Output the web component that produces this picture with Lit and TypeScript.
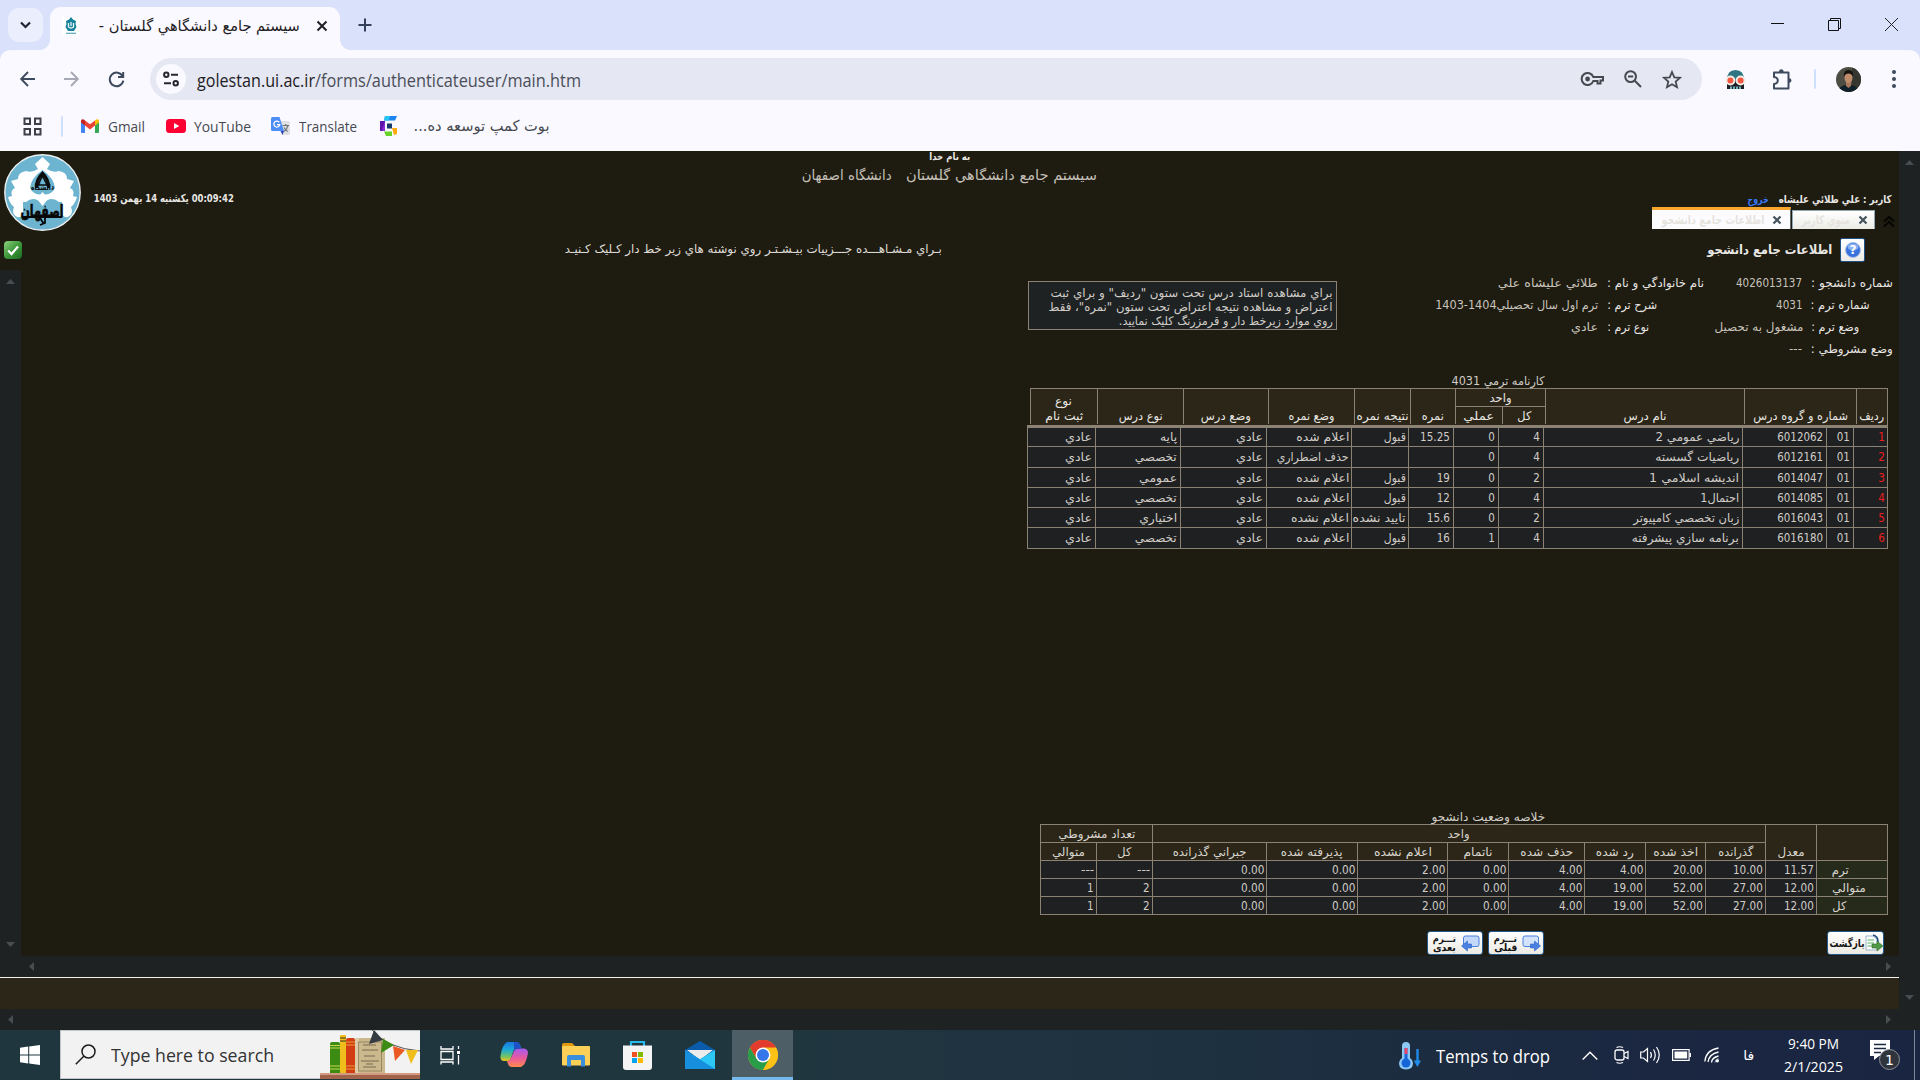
import { LitElement, html, svg, css, nothing } from "lit";
import { customElement, property } from "lit/decorators.js";

/** One line of text condensed or widened to an exact advance width. */
@customElement("fit-text")
class FitText extends LitElement {
  @property() t = "";
  @property({ type: Number }) w = 0;
  @property({ type: Boolean, reflect: true }) rtl = false;
  static styles = css`
    :host { display: inline-block; white-space: pre; flex: none; text-align: left; }
    :host([rtl]) { direction: rtl; text-align: right; }
    span { display: inline-block; transform-origin: 0 50%; }
    :host([rtl]) span { transform-origin: 100% 50%; }
  `;
  updated() {
    const s = this.renderRoot.querySelector("span") as HTMLElement;
    s.style.transform = "none";
    if (!this.w) return;
    this.style.width = this.w + "px";
    const r = s.getBoundingClientRect().width;
    if (r) s.style.transform = `scaleX(${this.w / r})`;
  }
  render() {
    return html`<span>${this.t}</span>`;
  }
}

const fa = (t: string, w: number, cls = "") => html`<fit-text rtl class=${cls} .t=${t} .w=${w}></fit-text>`;
const en = (t: string, w: number, cls = "") => html`<fit-text class=${cls} .t=${t} .w=${w}></fit-text>`;
const icon = (w: number, h: number, body: unknown, cls = "", vb = `0 0 ${w} ${h}`) =>
  html`<svg class="ic ${cls}" width=${w} height=${h} viewBox=${vb} fill="none">${body}</svg>`;

type T = [string, number];
const D = (n: string): T => [n, Math.round([...n].reduce((a, c) => a + (c === "." ? 3.6 : c === "-" ? 4.4 : 6.55), 0) * 10) / 10];
const ADI: T = ["عادي", 27];
const PASS: T = ["قبول", 22];
const SHOWN: T = ["اعلام شده", 53];
const SPEC: T = ["تخصصي", 42];
const NONE: T = ["", 0];

const courses: T[][] = [
  [ADI, ["پايه", 17], ADI, SHOWN, PASS, D("15.25"), D("0"), D("4"), ["رياضي عمومي 2", 84], D("6012062"), D("01"), D("1")],
  [ADI, SPEC, ADI, ["حذف اضطراري", 72], NONE, NONE, D("0"), D("4"), ["رياضيات گسسته", 84], D("6012161"), D("01"), D("2")],
  [ADI, ["عمومي", 38], ADI, SHOWN, PASS, D("19"), D("0"), D("2"), ["انديشه اسلامي 1", 90], D("6014047"), D("01"), D("3")],
  [ADI, SPEC, ADI, SHOWN, PASS, D("12"), D("0"), D("4"), ["احتمال1", 39], D("6014085"), D("01"), D("4")],
  [ADI, ["اختياري", 38], ADI, ["اعلام نشده", 58], ["تاييد نشده", 53], D("15.6"), D("0"), D("2"), ["زبان تخصصي كامپيوتر", 106], D("6016043"), D("01"), D("5")],
  [ADI, SPEC, ADI, SHOWN, PASS, D("16"), D("1"), D("4"), ["برنامه سازي پيشرفته", 107], D("6016180"), D("01"), D("6")],
];

const sumHead: T[] = [
  ["متوالي", 33], ["كل", 14], ["جبراني گذرانده", 74], ["پذيرفته شده", 62], ["اعلام نشده", 58], ["ناتمام", 29],
  ["حذف شده", 53], ["رد شده", 38], ["اخذ شده", 45], ["گذرانده", 35],
];
const sumRows: [string[], T][] = [
  [["---", "---", "0.00", "0.00", "2.00", "0.00", "4.00", "4.00", "20.00", "10.00", "11.57"], ["ترم", 17]],
  [["1", "2", "0.00", "0.00", "2.00", "0.00", "4.00", "19.00", "52.00", "27.00", "12.00"], ["متوالي", 34]],
  [["1", "2", "0.00", "0.00", "2.00", "0.00", "4.00", "19.00", "52.00", "27.00", "12.00"], ["كل", 14]],
];

const closeX = svg`<path d="M1.5 1.5L8.5 8.5M8.5 1.5L1.5 8.5" stroke="#46525c" stroke-width="2.2"/>`;

@customElement("app-root")
class AppRoot extends LitElement {
  static styles = css`
    :host { display: block; width: 1920px; height: 1080px; overflow: hidden; }
    * { box-sizing: border-box; }
    .app { width: 1920px; height: 1080px; display: flex; flex-direction: column; background: #1e1b10; }
    .ic { display: block; flex: none; overflow: visible; }

    /* browser frame */
    .chrome { background: #dae1fa; font-family: "Open Sans", "Noto Sans", "DejaVu Sans Condensed", sans-serif; color: #1f2023; height: 151px; flex: none; }
    .strip { height: 50px; display: flex; padding-left: 8px; }
    .menu { width: 35px; height: 34px; margin-top: 8px; border-radius: 11px; background: #ebeffd; display: grid; place-items: center; }
    .tab { width: 290px; height: 43px; margin: 7px 0 0 7px; padding: 0 14px 6px 12px; background: #faf9ff; border-radius: 11px 11px 0 0; display: flex; align-items: center; position: relative; }
    .tab::before, .tab::after { content: ""; position: absolute; bottom: 0; width: 10px; height: 10px; }
    .tab::before { left: -10px; background: radial-gradient(circle at 0 0, transparent 9.5px, #faf9ff 10px); }
    .tab::after { right: -10px; background: radial-gradient(circle at 100% 0, transparent 9.5px, #faf9ff 10px); }
    .tabtitle { font-size: 15px; margin: 0 16px 0 19px; font-family: "DejaVu Sans Condensed", sans-serif; }
    .plus { margin: 18px 0 0 18px; }
    .wc { margin-left: auto; margin-right: 22px; display: flex; gap: 44px; padding-top: 18px; }
    .mid { background: #faf9ff; border-radius: 10px 10px 0 0; }
    .toolbar { height: 58px; display: flex; align-items: center; padding-left: 20px; }
    .i-fwd { margin-left: 29px; }
    .i-rel { margin-left: 29px; }
    .omni { width: 1552px; height: 42px; border-radius: 21px; background: #e5e8f3; margin-left: 25px; display: flex; align-items: center; padding: 0 20px 0 6px; }
    .site { width: 30px; height: 30px; border-radius: 50%; background: #faf9ff; display: grid; place-items: center; margin-right: 11px; }
    .url { font-size: 18px; line-height: 30px; display: flex; padding-top: 1px; }
    .url .path { color: #4b4e58; }
    .omni-r { margin-left: auto; display: flex; align-items: center; gap: 20px; }
    .ext { display: flex; align-items: center; padding-left: 23px; }
    .i-puz { margin-left: 25px; }
    .vsep { width: 2px; height: 20px; background: #cfe0fc; border-radius: 1px; }
    .vsep.a { margin: 0 20px 0 21px; }
    .i-dots { margin-left: 31px; }
    .marks { height: 43px; padding: 0 0 7px 23px; display: flex; align-items: center; font-size: 15px; color: #46494f; }
    .vsep.b { margin: 0 18px 0 19px; height: 21px; }
    .m1 { margin: 0 21px 0 9px; }
    .m2 { margin: 0 20px 0 8px; }
    .m3 { margin: 0 23px 0 9px; }
    .m4 { margin-left: 16px; font-family: "DejaVu Sans Condensed", sans-serif; }

    /* page */
    .page { height: 879px; flex: none; display: grid; grid-template-columns: 1899px 21px; font-family: "DejaVu Sans Condensed", "DejaVu Sans", sans-serif; font-size: 12px; color: #d1cdc7; }
    .bar { background: #1f2223; display: flex; justify-content: space-between; align-items: center; }
    .bar.v { flex-direction: column; }
    .main { display: flex; flex-direction: column; }
    .bar.r { padding: 9px 0 30px; }
    .bar.l { width: 21px; padding: 9px 0 9px; flex: none; }
    .bar.h1 { height: 21px; padding: 0 8px 0 29px; }
    .bar.h2 { height: 21px; padding: 0 8px 0 8px; }
    .top { height: 84px; display: grid; grid-template-columns: 1fr auto 1fr; }
    .brand { display: flex; padding: 3px 0 0 4px; gap: 13px; }
    .brand .date { margin-top: 37px; font-size: 11px; line-height: 16px; font-weight: bold; color: #e8e6e3; }
    .names { display: flex; flex-direction: column; align-items: center; }
    .names .god { font-size: 10px; line-height: 12px; font-weight: bold; color: #e8e6e3; }
    .names .sys { display: flex; gap: 14px; font-size: 14px; line-height: 20px; margin-top: 2px; color: #c5c0b8; }
    .who { display: flex; flex-direction: column; align-items: flex-end; padding-top: 41px; }
    .user { display: flex; gap: 10px; padding-right: 7px; font-size: 11px; line-height: 15px; font-weight: bold; color: #e8e6e3; }
    .user .out { color: #3b78f6; }
    .tabs { display: flex; align-items: flex-end; height: 22px; font-weight: bold; color: #e6e3df; line-height: 16px; }
    .pt { display: flex; align-items: center; justify-content: flex-end; }
    .pt.on { width: 139px; height: 22px; background: #fcfcfe; border-top: 3px solid #f8a72c; padding-right: 8px; gap: 7px; border-right: 1px solid #5f6c70; }
    .pt.off { width: 83px; height: 19px; margin-left: 1px; background: linear-gradient(#fff, #ecece6); border: 1px solid #91a7b4; border-bottom: 0; padding-right: 6px; gap: 8px; }
    .up { margin: 0 4px 2px 8px; }
    .status { height: 35px; display: flex; align-items: flex-start; padding: 3px 34px 0 4px; color: #e8e6e3; line-height: 23px; }
    .status .ok { margin-top: 3px; }
    .status .msg { margin-left: 543px; color: #dedbd6; }
    .status .ttl { margin-left: auto; font-weight: bold; font-size: 13px; }
    .help { width: 25px; height: 24px; border: 1px solid #1f5185; background: linear-gradient(#fff, #ecebe6); border-radius: 2px; display: grid; place-items: center; margin-left: 8px; }
    .view { height: 686px; display: flex; }
    .doc { width: 1878px; padding: 2px 11px 0 1006px; display: flex; flex-direction: column; }
    .info { display: grid; grid-template-columns: 310px 260px 116px 88px 90px; grid-template-rows: repeat(4, 22px); line-height: 22px; padding-left: 1px; width: 865px; }
    .lab { padding-left: 9px; color: #e8e6e3; }
    .val { text-align: right; color: #c8c3bb; }
    .note { grid-row: 1 / 5; margin-top: 9px; width: 309px; height: 49px; border: 1px solid #8c8273; background: #1f2223; display: flex; flex-direction: column; align-items: flex-end; padding: 4px 3px 0 0; line-height: 14px; }
    .cap { text-align: center; line-height: 14px; }
    .cap.c1 { height: 14px; margin-top: 14px; padding-right: 343px; text-align: right; }
    .cap.c2 { height: 14px; margin-top: 261px; padding-right: 343px; text-align: right; }
    .head { align-self: flex-end; margin-right: 0; width: 858px; height: 37px; display: grid; grid-template-columns: 67px 86px 85px 86px 56px 45px 47px 43px 199px 112px 31px; grid-template-rows: 17px 18px; background: #2b2617; border-top: 1px solid #8c8273; border-right: 1px solid #8c8273; color: #e8e6e3; }
    .th { border-left: 1px solid #8c8273; grid-row: 1 / 3; display: flex; flex-direction: column; align-items: center; justify-content: flex-end; line-height: 15px; }
    .th.two { grid-row: 1; grid-column: span 2; border-bottom: 1px solid #8c8273; height: 18px; }
    .th.sub { grid-row: 2; }
    .th.sub.s1 { grid-column: 7; border-left: 1px solid #8c8273; }
    .th.sub.s2 { grid-column: 8; }
    .th.c9 { grid-column: 9; } .th.c10 { grid-column: 10; } .th.c11 { grid-column: 11; }
    .wrap { display: flex; flex-direction: column; width: 861px; margin-left: 0; }
    .body { width: 861px; border-top: 3px solid #8c8273; border-right: 1px solid #8c8273; background: #1f2022; display: grid; grid-template-columns: 68px 85px 86px 85px 57px 45px 45px 45px 199px 84px 27px 34px; grid-template-rows: 19px 21px 20px 20px 20px 21px; }
    .td { border-left: 1px solid #8c8273; border-bottom: 1px solid #8c8273; display: flex; justify-content: flex-end; align-items: center; padding-right: 3px; line-height: 16px; min-width: 0; }
    .td.tight { padding-right: 2px; }
    .td.red { color: #f01e1e; padding-right: 2px; }
    .sum { width: 848px; align-self: flex-start; margin-left: 13px; display: grid; grid-template-columns: 56px 56px 114px 91px 90px 61px 76px 61px 60px 60px 51px 71px; grid-template-rows: repeat(5, 18px); border-top: 1px solid #8c8273; border-right: 1px solid #8c8273; background: #1f2022; }
    .sh { border-left: 1px solid #8c8273; border-bottom: 1px solid #8c8273; background: #2b2617; display: flex; justify-content: center; align-items: center; line-height: 16px; color: #d8d4ce; }
    .sh.w2 { grid-column: span 2; }
    .sh.w8 { grid-column: span 8; }
    .sh.r2 { grid-row: 1 / 3; align-items: flex-end; }
    .sh.gpa { grid-column: 11; }
    .sh.none { grid-column: 12; }
    .sh.row { background: #262a1a; justify-content: flex-start; padding-left: 15px; }
    .btns { display: flex; margin-top: 16px; padding-left: 400px; gap: 5px; width: 857px; }
    .btn { width: 56px; height: 24px; border: 1px solid #24598f; border-radius: 3px; background: linear-gradient(#fff, #ebeae2); display: flex; align-items: center; justify-content: space-between; color: #141414; font-weight: bold; padding: 0 2px 0 5px; }
    .btn .two { display: flex; flex-direction: column; line-height: 9px; font-size: 10px; align-items: center; padding-bottom: 1px; }
    .btn.back { width: 57px; margin-left: auto; padding: 0 0 0 1px; font-size: 11px; margin-right: 0; }
    .foot { height: 32px; border-top: 1px solid #f4f2ec; background: #2b2617; }

    /* taskbar */
    .task { height: 50px; flex: none; display: flex; background: linear-gradient(90deg, #20363f 0, #20363f 800px, #1d3040 1250px, #1b2741 1650px, #1a2542 1920px); font-family: "Open Sans", "Noto Sans", sans-serif; color: #fff; align-items: center; }
    .start { margin: 0 20px; }
    .search { width: 360px; height: 49px; align-self: flex-start; background: #f2f2f2; border: 1px solid #c2c5c6; border-right: 0; display: flex; align-items: center; padding-left: 14px; color: #333; font-size: 18px; }
    .search .q { margin-left: 15px; }
    .search .art { margin-left: auto; }
    .apps { display: flex; align-items: center; height: 50px; }
    .a0 { margin-left: 20px; } .a1 { margin-left: 40px; } .a2 { margin-left: 34px; } .a3 { margin-left: 33px; } .a4 { margin-left: 33px; }
    .live { width: 61px; height: 50px; margin-left: 17px; background: #4d5e66; border-bottom: 3px solid #76b9ed; display: grid; place-items: center; padding-top: 3px; }
    .temp { margin-left: 606px; }
    .wt { margin-left: 15px; font-size: 17.5px; padding-top: 1px; }
    .t1 { margin-left: 32px; } .t2 { margin-left: 16px; } .t3 { margin-left: 11px; } .t4 { margin-left: 11px; } .t5 { margin-left: 13px; }
    .lang { margin-left: 23px; font-family: "DejaVu Sans Condensed", sans-serif; font-size: 13px; }
    .clock { width: 60px; margin-left: 29px; height: 50px; display: flex; flex-direction: column; align-items: center; font-size: 14.5px; line-height: 23px; padding-top: 2px; }
    .noti { margin-left: 27px; }
    .edge { margin-left: auto; margin-right: 5px; width: 1px; height: 50px; background: #7d8796; }
    svg text { font-family: "DejaVu Sans", sans-serif; }
  `;

  private arrow(d: "u" | "d" | "l" | "r") {
    const p = { u: "M0 5L4.5 0L9 5Z", d: "M0 0L4.5 5L9 0Z", l: "M5 0L0 4.5L5 9Z", r: "M0 0L5 4.5L0 9Z" }[d];
    const v = d === "u" || d === "d";
    return icon(v ? 9 : 5, v ? 5 : 9, svg`<path d=${p} fill="#484d50"/>`);
  }

  private chrome() {
    return html`<div class="chrome">
      <div class="strip">
        <div class="menu">${icon(11, 8, svg`<path d="M1 1.5L5.5 6L10 1.5" stroke="#1f2430" stroke-width="2.2"/>`)}</div>
        <div class="tab">
          ${icon(18, 18, svg`<rect width="18" height="18" fill="#fff"/><path d="M9 0L11 2.5L14 4L13.5 7L14.5 10L12 14H6L3.5 10L4.5 7L4 4L7 2.5Z" fill="#17839b"/><path d="M6.5 6V10Q9 12 11.5 10V6M9 5V9" stroke="#e9f6f8" stroke-width="1.3"/><path d="M4 16.3H14" stroke="#58a8b8" stroke-width="1.2"/>`)}
          ${fa("سيستم جامع دانشگاهي گلستان -", 201, "tabtitle")}
          ${icon(12, 12, svg`<path d="M1.5 1.5L10.5 10.5M10.5 1.5L1.5 10.5" stroke="#1f2023" stroke-width="2"/>`)}
        </div>
        ${icon(14, 14, svg`<path d="M7 0.5V13.5M0.5 7H13.5" stroke="#33415a" stroke-width="2"/>`, "plus")}
        <div class="wc">
          ${icon(13, 13, svg`<path d="M0 5.5H13" stroke="#111"/>`)}
          ${icon(13, 13, svg`<path d="M.5 2.5H10.5V12.5H.5ZM2.5 2.5V.5H12.5V10.5H10.5" stroke="#111"/>`)}
          ${icon(13, 13, svg`<path d="M0 0L13 13M13 0L0 13" stroke="#222"/>`)}
        </div>
      </div>
      <div class="mid">
        <div class="toolbar">
          ${icon(15, 16, svg`<path d="M15 8H1.5M8 1L1.2 8L8 15" stroke="#3e4a5e" stroke-width="1.9"/>`)}
          ${icon(15, 16, svg`<path d="M0 8H13.5M7 1L13.8 8L7 15" stroke="#a6a8b3" stroke-width="1.9"/>`, "i-fwd")}
          ${icon(17, 17, svg`<path d="M14.6 5.2A6.8 6.8 0 1 0 15.3 9.6M15.2 1V6H10" stroke="#3e4a5e" stroke-width="2"/>`, "i-rel")}
          <div class="omni">
            <div class="site">${icon(16, 16, svg`<g stroke="#26282e" stroke-width="2"><circle cx="3.3" cy="3.8" r="2.2"/><path d="M8 3.8H15M1 12.2H8"/><circle cx="12.7" cy="12.2" r="2.2"/></g>`)}</div>
            <div class="url">${en("golestan.ui.ac.ir", 118)}${en("/forms/authenticateuser/main.htm", 266, "path")}</div>
            <div class="omni-r">
              ${icon(23, 14, svg`<g stroke="#45484f" stroke-width="2"><path d="M12.3 5H22V8.5H19.5V11.5H16.5V9H12.3A6 6 0 1 1 12.3 5Z"/></g><circle cx="6.6" cy="7" r="2.4" fill="#45484f"/>`)}
              ${icon(18, 18, svg`<g stroke="#45484f" stroke-width="2"><circle cx="6.6" cy="6.6" r="5.4"/><path d="M10.8 10.8L17 17M4 6.6H9.2"/></g>`)}
              ${icon(20, 19, svg`<path d="M10 2L12.3 7.3L18 7.8L13.7 11.6L15 17.2L10 14.2L5 17.2L6.3 11.6L2 7.8L7.7 7.3Z" stroke="#45484f" stroke-width="1.8"/>`)}
            </div>
          </div>
          <div class="ext">
            ${icon(21, 19, svg`<path d="M2 10Q2 0 10.500 0Q19 0 19 10Z" fill="#2f7482"/><path d="M2 10H19V19H2Z" fill="#1a1d22"/><path d="M5 19V16.500H16V19Z" fill="#6fb0b8"/><path d="M7.500 16.500V19M10.500 16.500V19M13.500 16.500V19" stroke="#1a1d22"/><circle cx="5.400" cy="10.500" r="4" fill="#f4563f" stroke="#f1ece6" stroke-width="2"/><circle cx="15.600" cy="10.500" r="4" fill="#f4563f" stroke="#f1ece6" stroke-width="2"/>`)}
            ${icon(22, 21, svg`<path d="M3 3.500H17.500V19.500H3V15Q6.800 14.500 6.800 11.500Q6.800 8.500 3 8Z" stroke="#3e4a5e" stroke-width="2" stroke-linejoin="round"/><path d="M8 3Q8 .3 10.300 .3Q12.600 .3 12.600 3ZM18 9.300Q20.500 9.300 20.500 11.500Q20.500 13.700 18 13.700Z" fill="#3e4a5e"/>`, "i-puz")}
            <div class="vsep a"></div>
            ${icon(25, 25, svg`<defs><clipPath id="av"><circle cx="12.500" cy="12.500" r="12.500"/></clipPath></defs><g clip-path="url(#av)"><rect width="25" height="25" fill="#4d4d43"/><rect x="16" width="9" height="25" fill="#35362f"/><path d="M2 25Q3 18 12 17.500Q22 18 23 25Z" fill="#10202a"/><path d="M10 14H15V19L12.500 21L10 19Z" fill="#a8765a"/><ellipse cx="12.500" cy="10.500" rx="4" ry="5.500" fill="#c08d6c"/><path d="M8 10Q7 3 12.500 3Q18 3 17 10Q16 6.500 12.500 6.500Q9 6.500 8 10Z" fill="#15120f"/></g>`)}
            ${icon(4, 18, svg`<g fill="#3e4a5e"><circle cx="2" cy="2" r="2"/><circle cx="2" cy="9" r="2"/><circle cx="2" cy="16" r="2"/></g>`, "i-dots")}
          </div>
        </div>
        <div class="marks">
          ${icon(19, 19, svg`<path d="M1.500 1.500H7V7H1.500ZM12 1.500H17.500V7H12ZM1.500 12H7V17.500H1.500ZM12 12H17.500V17.500H12Z" stroke="#3d4047" stroke-width="2"/>`)}
          <div class="vsep b"></div>
          ${icon(18, 14, svg`<path d="M0 2V13Q0 14 1 14H4V6L0 3Z" fill="#4285f4"/><path d="M14 6V14H17Q18 14 18 13V2L14 5Z" fill="#34a853"/><path d="M4 1.500L9 5.300L14 1.500V6.500L9 10.400L4 6.500Z" fill="#ea4335"/><path d="M0 2Q.3 -.8 2.800 .6L4 1.500V6.500L0 3.500Z" fill="#c5221f"/><path d="M18 2Q17.700 -.8 15.200 .6L14 1.500V6.500L18 3.500Z" fill="#fbbc04"/>`)}
          ${en("Gmail", 37, "m1")}
          ${icon(20, 14, svg`<rect width="20" height="14" rx="3.500" fill="#f03"/><path d="M8 4L13.300 7L8 10Z" fill="#fff"/>`)}
          ${en("YouTube", 57, "m2")}
          ${icon(19, 18, svg`<path d="M7 4H17.500Q19 4 19 5.500V16.500Q19 18 17.500 18H11Z" fill="#dfe1e4"/><path d="M1.500 0H8.500L13 14H1.500Q0 14 0 12.500V1.500Q0 0 1.500 0Z" fill="#4d8df6"/><path d="M9.500 14H13L11.500 18Z" fill="#3445b4"/><path d="M8.300 5.300A3 3 0 1 0 8.800 7.600H6" stroke="#fff" stroke-width="1.300"/><path d="M11.500 8.500H18M14.700 7V8.500M17 8.500Q16 12.500 13 14.500M13 10.500Q14.500 13.500 17 14.500" stroke="#6b7378" stroke-width="1.100"/>`)}
          ${en("Translate", 58, "m3")}
          ${icon(17, 20, svg`<path d="M5 0H17L15 4.500H4Z" fill="#1a84f0"/><path d="M5 0H10L9 4.500H4Z" fill="#26c4f0"/><path d="M0 5H5V15H0Z" fill="#8b2fd6"/><path d="M0 5H5L2 15H0Z" fill="#6215ac"/><path d="M4 15.500H12V20H6Z" fill="#66d32a"/><path d="M12 12H17V18L14 19Z" fill="#ffab10"/><rect x="7" y="7.500" width="5" height="5" fill="#173b66"/>`)}
          ${fa("بوت کمپ توسعه ده...", 136, "m4")}
        </div>
      </div>
    </div>`;
  }

  private logo() {
    return icon(77, 77, svg`
      <circle cx="38.500" cy="38.500" r="37.700" fill="#6cb4d0" stroke="#e9eff0" stroke-width="1.400"/>
      <path d="M38.500 3L46 10L43 15Q49 19 55 17Q63 18 63 25L70 27L66 34Q71 36 69 42L73 43Q71 50 67 53Q70 60 64 63Q58 64 58 58V48H44L38.500 43L33 48H19V58Q19 64 13 63Q7 60 10 53Q6 50 4 43L8 42Q6 36 11 34L7 27L14 25Q14 18 22 17Q28 19 34 15L31 10Z" fill="#fff"/>
      <path d="M38.500 16Q27 24 26 34Q30 42 38.500 40Q47 42 51 34Q50 24 38.500 16Z" fill="#6cb4d0"/>
      <path d="M38.500 17Q30 25 31 34H34Q34 26 38.500 22Q43 26 43 34H46Q47 25 38.500 17Z" fill="#0c0c0c"/>
      <path d="M38.500 22L43 31H34Z" stroke="#0c0c0c" stroke-width="1.500"/>
      <path d="M22 48Q30 41 38.500 50Q47 41 55 48V56H22Z" fill="#6cb4d0"/>
      <path d="M38.500 38L44 45L38.500 52L33 45Z" fill="#fff"/>
      <text x="38.500" y="36" text-anchor="middle" font-size="8.500" font-weight="bold" fill="#0c0c0c" textLength="23" lengthAdjust="spacingAndGlyphs">دانشگاه</text>
      <text x="38" y="63" text-anchor="middle" font-size="17" font-weight="bold" fill="#070707" stroke="#070707" stroke-width=".6" textLength="43" lengthAdjust="spacingAndGlyphs">اصفهان</text>
      <path d="M18 63H58M36 64L40 70M41 64V69L36 71" stroke="#070707" stroke-width="1.800"/>`);
  }

  private top() {
    return html`<div class="top">
        <div class="brand">${this.logo()}${fa("00:09:42 يکشنبه 14 بهمن 1403", 140, "date")}</div>
        <div class="names">
          ${fa("به نام خدا", 41, "god")}
          <div class="sys">${fa("دانشگاه اصفهان", 90)}${fa("سيستم جامع دانشگاهي گلستان", 191)}</div>
        </div>
        <div class="who">
          <div class="user">${fa("خروج", 21, "out")}${fa("کاربر : علي طلائي عليشاه", 113)}</div>
          <div class="tabs">
            <div class="pt on">${fa("اطلاعات جامع دانشجو", 103)}${icon(10, 10, closeX)}</div>
            <div class="pt off">${fa("منوي کاربر", 48)}${icon(10, 10, closeX)}</div>
            ${icon(12, 12, svg`<path d="M1 6.500L6 1.800L11 6.500M1 11.500L6 6.800L11 11.500" stroke="#050504" stroke-width="2"/>`, "up")}
          </div>
        </div>
      </div>
      <div class="status">
        ${icon(18, 18, svg`<defs><linearGradient id="g" x2="1" y2="1"><stop stop-color="#8ed07c"/><stop offset=".5" stop-color="#3f9a3b"/><stop offset="1" stop-color="#1c6a22"/></linearGradient></defs><rect width="18" height="18" rx="4" fill="url(#g)"/><path d="M4.200 9.500L7.500 13L14 5.500" stroke="#fff" stroke-width="2.200"/>`, "ok")}
        ${fa("بـراي مـشـاهـــده جـــزييات بيـشـتـر روي نوشته هاي زير خط دار کـليک کـنيـد", 377, "msg")}
        ${fa("اطلاعات جامع دانشجو", 125, "ttl")}
        <div class="help">${icon(16, 16, svg`<circle cx="8" cy="8" r="7.500" fill="#3a72dd" stroke="#a9bfe6"/><ellipse cx="8" cy="5" rx="5.500" ry="3.500" fill="#86aef2"/><text x="8" y="12.300" text-anchor="middle" font-size="12" font-weight="bold" fill="#fff">?</text>`)}</div>
      </div>`;
  }

  private info() {
    return html`<div class="info">
      <div class="note">
        ${fa('براي مشاهده استاد درس تحت ستون "رديف" و براي ثبت', 282)}
        ${fa('اعتراض و مشاهده نتيجه اعتراض تحت ستون "نمره"، فقط', 284)}
        ${fa("روي موارد زيرخط دار و قرمزرنگ کليک نماييد.", 214)}
      </div>
      <div class="val">${fa("طلائي عليشاه علي", 100)}</div><div class="lab">${fa("نام خانوادگي و نام :", 97)}</div>
      <div class="val">${en("4026013137", 66)}</div><div class="lab">${fa("شماره دانشجو :", 82)}</div>
      <div class="val">${fa("ترم اول سال تحصيلي1404-1403", 163)}</div><div class="lab">${fa("شرح ترم :", 50)}</div>
      <div class="val">${en("4031", 26.5)}</div><div class="lab">${fa("شماره ترم :", 59)}</div>
      <div class="val">${fa("عادي", 27)}</div><div class="lab">${fa("نوع ترم :", 42)}</div>
      <div class="val">${fa("مشغول به تحصيل", 89)}</div><div class="lab">${fa("وضع ترم :", 48)}</div>
      <div></div><div></div>
      <div class="val">${en("---", 13)}</div><div class="lab">${fa("وضع مشروطي :", 82)}</div>
    </div>`;
  }

  private report() {
    return html`<div class="cap c1">${fa("کارنامه ترمي 4031", 93)}</div>
      <div class="wrap">
        <div class="head">
          <div class="th">${fa("نوع", 17)}${fa("ثبت نام", 38)}</div>
          <div class="th">${fa("نوع درس", 44)}</div>
          <div class="th">${fa("وضع درس", 50)}</div>
          <div class="th">${fa("وضع نمره", 46)}</div>
          <div class="th">${fa("نتيجه نمره", 52)}</div>
          <div class="th">${fa("نمره", 22)}</div>
          <div class="th two">${fa("واحد", 22)}</div>
          <div class="th sub s1">${fa("عملي", 31)}</div>
          <div class="th sub s2">${fa("كل", 14)}</div>
          <div class="th c9">${fa("نام درس", 43)}</div>
          <div class="th c10">${fa("شماره و گروه درس", 95)}</div>
          <div class="th c11">${fa("رديف", 25)}</div>
        </div>
        <div class="body">
          ${courses.map((r) => r.map(([t, w], i) => html`<div class="td ${i === 11 ? "red" : i === 4 || i === 3 ? "tight" : ""}">${t ? fa(t, w) : nothing}</div>`))}
        </div>
      </div>`;
  }

  private summary() {
    return html`<div class="cap c2">${fa("خلاصه وضعيت دانشجو", 114)}</div>
      <div class="sum">
        <div class="sh w2">${fa("تعداد مشروطي", 77)}</div>
        <div class="sh w8">${fa("واحد", 22)}</div>
        <div class="sh r2 gpa">${fa("معدل", 27)}</div>
        <div class="sh r2 none"></div>
        ${sumHead.map(([t, w]) => html`<div class="sh">${fa(t, w)}</div>`)}
        ${sumRows.map(([c, [l, w]]) => html`${c.map((n) => html`<div class="td tight">${en(...D(n))}</div>`)}<div class="sh row">${fa(l, w)}</div>`)}
      </div>
      <div class="btns">
        <div class="btn"><div class="two">${fa("تـــرم", 23)}${fa("بعدی", 23)}</div>${icon(19, 17, svg`<rect x="2.500" y="1" width="15.500" height="10.500" rx="2" fill="#c4d8fb" stroke="#4a7fe0"/><path d="M.5 11L6.500 6V9H10.500V13H6.500V16Z" fill="#4a80e2" stroke="#2e62c4" stroke-width=".6"/>`)}</div>
        <div class="btn"><div class="two">${fa("تـــرم", 23)}${fa("قبلی", 23)}</div>${icon(19, 17, svg`<rect x="1" y="1" width="15.500" height="10.500" rx="2" fill="#d4e3fc" stroke="#4a7fe0"/><path d="M18.500 11L12.500 6V9H8.500V13H12.500V16Z" fill="#4a80e2" stroke="#2e62c4" stroke-width=".6"/>`)}</div>
        <div class="btn back">${fa("بازگشت", 35)}${icon(18, 18, svg`<path d="M1 2H8L12 5V16H1Z" fill="#fafdff" stroke="#9db4c8"/><path d="M2.500 6H9M2.500 9H9M2.500 12H7" stroke="#58b45a"/><path d="M8 1Q13 2 13 8" stroke="#1d4c80" stroke-width="1.600"/><path d="M7 10H12V7L18 12L12 17V14H7Z" fill="#4f9a46" stroke="#326c30" stroke-width=".6"/>`)}</div>
      </div>`;
  }

  private taskbar() {
    return html`<div class="task">
      ${icon(20, 20, svg`<path d="M0 2.800L8.200 1.600V9.500H0ZM9.200 1.500L20 0V9.500H9.200ZM0 10.500H8.200V18.400L0 17.200ZM9.200 10.500H20V20L9.200 18.500Z" fill="#fff"/>`, "start")}
      <div class="search">
        ${icon(21, 21, svg`<circle cx="13.500" cy="7.500" r="6.500" stroke="#1c1c1c" stroke-width="1.500"/><path d="M9 12L.8 20.200" stroke="#1c1c1c" stroke-width="1.500"/>`)}
        ${en("Type here to search", 163, "q")}
        ${icon(100, 49, svg`
          <rect x="35" y="8" width="30" height="37" fill="#cbb88d"/><rect x="35" y="8" width="4" height="37" fill="#ddcda6"/><rect x="38.500" y="12" width="23" height="29" stroke="#8d7c5a" stroke-width=".8"/>
          <path d="M43 15H56M42 20H58M44 26H55M41 31H59M46 34H53M43 37H56" stroke="#766a50"/>
          <rect x="10" y="12" width="10" height="33" rx="2" fill="#3c8c14"/><path d="M10 15.500H20M10 18H20M10 36H20M10 39H20" stroke="#c8d84a"/>
          <rect x="20" y="5" width="6" height="40" rx="1" fill="#efbd1c"/><path d="M20 8H26M20 11H26" stroke="#3b3420"/>
          <rect x="26" y="8" width="9" height="37" rx="2" fill="#d23d14"/><path d="M26 12H35M26 15H35M26 36H35M26 39H35" stroke="#eb9c3a"/>
          <path d="M0 44H100V49H0Z" fill="#a2634b"/><path d="M0 44H100" stroke="#d29a80" stroke-width="2"/>
          <path d="M52 0Q66 18 100 21" stroke="#555"/>
          <path d="M54 0L63 10L49 14Z" fill="#353b42"/><path d="M63 9L74 15L61 23Z" fill="#3c8c14"/><path d="M73 16L85 20L75 31Z" fill="#ea5a22"/><path d="M86 20L98 20L91 34Z" fill="#efbd1c"/>`, "art")}
      </div>
      <div class="apps">
        ${icon(20, 20, svg`<path d="M1 1V4H13V1M1 6.500H13V14.500H1ZM1 19.500V17H13V19.500M18.500 1V4M18.500 10V19.500" stroke="#fff" stroke-width="1.300"/><rect x="17" y="6" width="3" height="3" fill="#fff"/>`, "a0")}
        ${icon(28, 26, svg`<defs><linearGradient id="c1" x2="0" y2="1"><stop stop-color="#1a77e0"/><stop offset=".4" stop-color="#1aa9d8"/><stop offset=".75" stop-color="#6cc36a"/><stop offset="1" stop-color="#f2c318"/></linearGradient><linearGradient id="c2" x2="0" y2="1"><stop stop-color="#a55bf0"/><stop offset=".5" stop-color="#e858a0"/><stop offset="1" stop-color="#ff8a4c"/></linearGradient></defs><path d="M7 0H17Q19 0 20 3L21 6H17Q14 6 13 10L11 16Q10 19 7 19H4Q0 19 .5 14Q2 3 7 0Z" fill="url(#c1)"/><path d="M21 25H12Q9 25 8 22L7 19Q10 19 11 16L14 9Q15 6.500 18 6.500H24Q28 7 28 11Q26 23 21 25Z" fill="url(#c2)"/><path d="M14 0H17Q19 0 20 3L21 6.500H17Q15 7 14 8.500Z" fill="#1e50c8"/>`, "a1")}
        ${icon(28, 24, svg`<path d="M0 2Q0 0 2 0H10L13 3V8H0Z" fill="#e09a10"/><rect y="3" width="28" height="19.500" rx="1" fill="#fccf56"/><path d="M5 14Q5 12 7 12H21Q23 12 23 14V23.500H19V17H9V23.500H5Z" fill="#3a8ede"/>`, "a2")}
        ${icon(29, 29, svg`<path d="M8 6V1H21V6" stroke="#28b8ec" stroke-width="2.200"/><path d="M0 4.500H29V26Q29 29 26 29H3Q0 29 0 26Z" fill="#f4f4f4"/><rect x="9" y="11" width="5" height="5" fill="#f25022"/><rect x="15" y="11" width="5" height="5" fill="#7fba00"/><rect x="9" y="17" width="5" height="5" fill="#00a4ef"/><rect x="15" y="17" width="5" height="5" fill="#ffb900"/>`, "a3")}
        ${icon(30, 28, svg`<path d="M0 9L15 0L30 9V12H0Z" fill="#0a5cab"/><path d="M2 9H28L15 19Z" fill="#f2f2f2"/><path d="M0 9L15 18L30 9V28H0Z" fill="#2fb4f0"/><path d="M3 9H27L15 18Z" fill="#ececec"/><path d="M0 28L30 9V28Z" fill="#2dc7f6"/><path d="M0 28V9L30 28Z" fill="#178fdf"/>`, "a4")}
        <div class="live">${icon(30, 30, svg`<circle cx="15" cy="15" r="15" fill="#fbc116"/><path d="M15 15L2.010 7.500A15 15 0 0 1 27.990 7.500Z" fill="#e33b2e"/><path d="M15 7.500H28A15 15 0 0 0 2 7.500L8.500 18.700Z" fill="#e33b2e"/><path d="M2 7.500A15 15 0 0 0 15 30L21.500 18.700L8.500 18.700Z" fill="#2a9d4a"/><path d="M21.500 18.750L15 30A15 15 0 0 0 28 7.500H15Z" fill="#fbc116"/><circle cx="15" cy="15" r="7.500" fill="#fff"/><circle cx="15" cy="15" r="6" fill="#3577ea"/>`)}</div>
      </div>
      ${icon(22, 29, svg`<path d="M3 5Q3 1 7 1Q11 1 11 5V17Q14 19 14 22Q14 28.500 7 28.500Q0 28.500 0 22Q0 19 3 17Z" fill="#8cc8f4"/><circle cx="7" cy="22" r="4.500" fill="#1565d8"/><rect x="5.500" y="7" width="3" height="14" fill="#1565d8"/><rect x="5.500" y="7" width="3" height="6" fill="#e8486a"/><path d="M18.500 8V22" stroke="#1f8bea" stroke-width="2.400"/><path d="M14.700 19.500H22L18.400 26Z" fill="#1f8bea"/>`, "temp")}
      ${en("Temps to drop", 114, "wt")}
      ${icon(16, 9, svg`<path d="M.7 8.500L8 1.200L15.300 8.500" stroke="#fff" stroke-width="1.400"/>`, "t1")}
      ${icon(15, 18, svg`<rect x="1" y="4" width="9" height="10" rx="2" stroke="#fff" stroke-width="1.300"/><path d="M10 7.500L14 5.500V12.500L10 10.500M2.500 1.500Q5.500 0 9 1.500M2.500 16.500Q5.500 18 9 16.500" stroke="#fff" stroke-width="1.200"/>`, "t2")}
      ${icon(21, 18, svg`<path d="M.7 6H3.500L7.500 2.500V15.500L3.500 12H.7Z" stroke="#fff" stroke-width="1.200"/><path d="M10.500 6Q12.300 9 10.500 12M13.500 3.500Q17 9 13.500 14.500M16.500 1Q22 9 16.500 17" stroke="#fff" stroke-width="1.200"/>`, "t3")}
      ${icon(19, 12, svg`<rect x=".6" y=".6" width="16.500" height="10.800" stroke="#fff" stroke-width="1.200"/><rect x="2.500" y="2.500" width="12.700" height="7" fill="#fff"/><rect x="17.500" y="4" width="1.500" height="4" fill="#fff"/>`, "t4")}
      ${icon(16, 16, svg`<path d="M.8 14.500Q2 3 14.500 1M4 15Q5 7 14.500 5M7.500 15.500Q8 10.500 14.500 9" stroke="#fff" stroke-width="1.300"/><circle cx="13.300" cy="13.800" r="1.700" fill="#fff"/><path d="M11 15.500Q11 12 14.500 11.500" stroke="#9fb0c4"/>`, "t5")}
      ${fa("فا", 11, "lang")}
      <div class="clock">${en("9:40 PM", 51)}${en("2/1/2025", 59)}</div>
      ${icon(31, 30, svg`<path d="M0 0H20V16H9L4 20V16H0Z" fill="#fff"/><path d="M4 4.500H16M4 8.500H16M4 12.500H11" stroke="#1b2741" stroke-width="1.300"/><circle cx="19.500" cy="19.500" r="10" fill="#30343c" stroke="#8c9097"/><text x="19.500" y="24.500" text-anchor="middle" font-size="14" fill="#fff">1</text>`, "noti")}
      <div class="edge"></div>
    </div>`;
  }

  render() {
    return html`<div class="app">
      ${this.chrome()}
      <div class="page">
        <div class="main">
          ${this.top()}
          <div class="view">
            <div class="bar v l">${this.arrow("u")}${this.arrow("d")}</div>
            <div class="doc">${this.info()}${this.report()}${this.summary()}</div>
          </div>
          <div class="bar h1">${this.arrow("l")}${this.arrow("r")}</div>
          <div class="foot"></div>
          <div class="bar h2">${this.arrow("l")}${this.arrow("r")}</div>
        </div>
        <div class="bar v r">${this.arrow("u")}${this.arrow("d")}</div>
      </div>
      ${this.taskbar()}
    </div>`;
  }
}
